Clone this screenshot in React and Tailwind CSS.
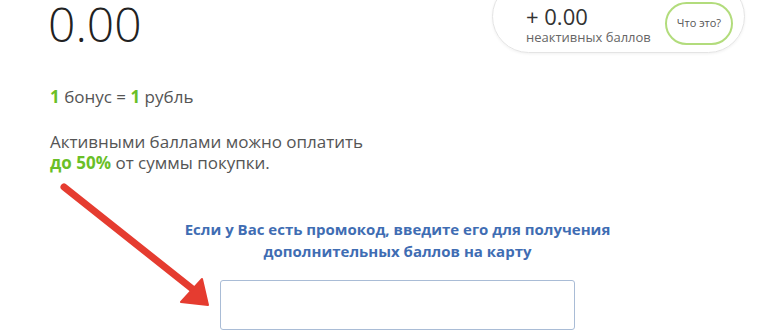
export default function App() {
  return (
    <div
      className="relative w-[770px] h-[330px] overflow-hidden bg-white text-[#555]"
      style={{ fontFamily: '"Open Sans", "Liberation Sans", sans-serif' }}
    >
      <div className="flex justify-between items-start">
        <div className="pl-[48px] text-[48px] leading-none font-light text-[#222] h-[48px]">0.00</div>
        <div className="mt-[-20px] mr-[25px] w-[253px] h-[73px] rounded-[37px] border border-[#e4e4e4] shadow-[0_1px_3px_rgba(0,0,0,0.06)] flex items-center justify-between pl-[33px] pr-[11px]">
          <div className="flex flex-col pt-[17px]">
            <div className="text-[22px] leading-[24px] text-[#333]">+ 0.00</div>
            <div className="text-[13px] leading-[18px] text-[#666]">неактивных баллов</div>
          </div>
          <div className="mt-[14px] w-[68px] h-[43px] rounded-full border-2 border-[#b2dc7c] flex items-center justify-center text-[11px] text-[#555]">
            Что это?
          </div>
        </div>
      </div>

      <div className="pl-[50px]">
        <div className="mt-[32px] text-[17px] leading-[24px]">
          <span className="font-bold text-[#6abf28]">1</span> бонус = <span className="font-bold text-[#6abf28]">1</span> рубль
        </div>
        <div className="mt-[22px] text-[17px] leading-[21px]">
          Активными баллами можно оплатить
          <br />
          <span className="font-bold text-[#6abf28]">до 50%</span> от суммы покупки.
        </div>
      </div>

      <div className="pl-[25px] flex flex-col items-center">
        <div className="mt-[45px] text-[15px] leading-[22px] font-bold text-[#3f6db3] text-center">
          Если у Вас есть промокод, введите его для получения
          <br />
          дополнительных баллов на карту
        </div>
        <input
          type="text"
          className="mt-[18px] w-[355px] h-[50px] border border-[#a9bcd6] rounded-[3px] outline-none"
        />
      </div>

      <svg className="absolute left-0 top-0 pointer-events-none" width="770" height="330">
        <line x1="64" y1="187" x2="195" y2="291" stroke="#e53c30" strokeWidth="7" strokeLinecap="round" />
        <polygon points="202,279 208,305 181,302" fill="#e53c30" stroke="#e53c30" strokeWidth="2" strokeLinejoin="round" />
      </svg>
    </div>
  );
}
